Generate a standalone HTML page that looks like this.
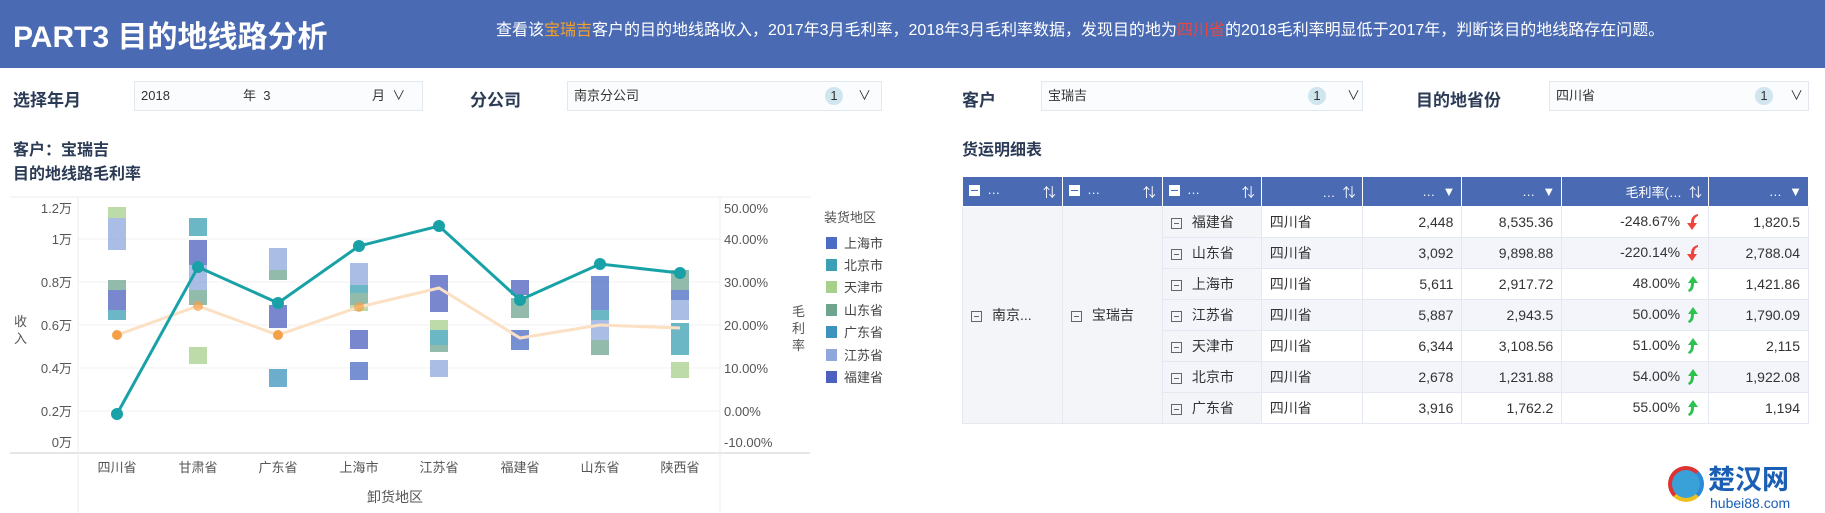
<!DOCTYPE html>
<html><head><meta charset="utf-8"><style>
*{margin:0;padding:0;box-sizing:border-box}
body{width:1825px;height:513px;background:#fff;font-family:"Liberation Sans","Noto Sans CJK SC",sans-serif;position:relative;overflow:hidden;color:#333}
.a{position:absolute;white-space:nowrap}
.hdr{left:0;top:0;width:1825px;height:68px;background:#4a6bb3}
.lbl{font-size:17px;font-weight:bold;color:#2b3a55}
.box{border:1px solid #e3e8ee;background:#fbfcfd;height:30px;font-size:13px;line-height:28px;color:#333}
.one{position:absolute;width:18px;height:18px;border-radius:9px;background:#cfe6ee;text-align:center;line-height:18px;font-size:13px;top:5px}
.chev{position:absolute;top:0;font-size:13px}
table{border-collapse:collapse;font-size:14px}
td{border:1px solid #e4e8f0;height:31px;padding:0 8px}
th{background:#4a6bb3;color:#fff;height:30px;border:1px solid #fff;font-weight:normal;font-size:13px;padding:0 6px}
.r{text-align:right}
.mi{display:inline-block;width:11px;height:11px;border:1px solid #666;position:relative;vertical-align:middle;margin-right:10px}
.mi:after{content:"";position:absolute;left:2px;right:2px;top:4px;height:1px;background:#666}
.hm{display:inline-block;width:11px;height:11px;background:#fff;position:relative;vertical-align:middle}
.hm:after{content:"";position:absolute;left:2px;right:2px;top:5px;height:1px;background:#4a6bb3}
svg.ar{vertical-align:middle;margin-left:6px}
</style></head><body>
<div class="a hdr"></div>
<div class="a" style="left:13px;top:18px;font-size:30px;font-weight:bold;color:#fff;line-height:40px">PART3 目的地线路分析</div>
<div class="a" style="left:496px;top:16px;font-size:16px;color:#fff">查看该<span style="color:#f5a02a">宝瑞吉</span>客户的目的地线路收入，2017年3月毛利率，2018年3月毛利率数据，发现目的地为<span style="color:#e8483d">四川省</span>的2018毛利率明显低于2017年，判断该目的地线路存在问题。</div>

<div class="a lbl" style="left:13px;top:86px">选择年月</div>
<div class="a box" style="left:134px;top:81px;width:289px"><span class="a" style="left:6px">2018</span><span class="a" style="left:108px">年&nbsp; 3</span><span class="a" style="left:237px">月 &nbsp;∨</span></div>
<div class="a lbl" style="left:470px;top:86px">分公司</div>
<div class="a box" style="left:567px;top:81px;width:315px"><span class="a" style="left:6px">南京分公司</span><span class="one" style="left:257px">1</span><span class="chev" style="left:290px">∨</span></div>
<div class="a lbl" style="left:962px;top:86px">客户</div>
<div class="a box" style="left:1041px;top:81px;width:322px"><span class="a" style="left:6px">宝瑞吉</span><span class="one" style="left:266px">1</span><span class="chev" style="left:305px">∨</span></div>
<div class="a lbl" style="left:1416px;top:86px">目的地省份</div>
<div class="a box" style="left:1549px;top:81px;width:260px"><span class="a" style="left:6px">四川省</span><span class="one" style="left:205px">1</span><span class="chev" style="left:240px">∨</span></div>

<div class="a lbl" style="left:13px;top:136px;font-size:16px">客户：宝瑞吉</div>
<div class="a lbl" style="left:13px;top:160px;font-size:16px">目的地线路毛利率</div>
<div class="a lbl" style="left:962px;top:136px;font-size:16px">货运明细表</div>

<svg class="a" style="left:0;top:0" width="960" height="513" font-family="Liberation Sans,Noto Sans CJK SC,sans-serif" font-size="13" fill="#555">
<line x1="10" y1="197" x2="810" y2="197" stroke="#eee"/>
<g stroke="#f2f2f2"><line x1="78" y1="239" x2="720" y2="239"/><line x1="78" y1="282" x2="720" y2="282"/><line x1="78" y1="325" x2="720" y2="325"/><line x1="78" y1="368" x2="720" y2="368"/><line x1="78" y1="411" x2="720" y2="411"/></g>
<line x1="10" y1="453" x2="810" y2="453" stroke="#e6e6e6" stroke-width="2"/>
<line x1="78" y1="197" x2="78" y2="513" stroke="#eee"/><line x1="720" y1="197" x2="720" y2="513" stroke="#eee"/>
<g text-anchor="end"><text x="72" y="213">1.2万</text><text x="72" y="244">1万</text><text x="72" y="287">0.8万</text><text x="72" y="330">0.6万</text><text x="72" y="373">0.4万</text><text x="72" y="416">0.2万</text><text x="72" y="447">0万</text></g>
<g><text x="724" y="213">50.00%</text><text x="724" y="244">40.00%</text><text x="724" y="287">30.00%</text><text x="724" y="330">20.00%</text><text x="724" y="373">10.00%</text><text x="724" y="416">0.00%</text><text x="724" y="447">-10.00%</text></g>
<text x="14" y="326">收</text><text x="14" y="343">入</text>
<text x="792" y="316">毛</text><text x="792" y="333">利</text><text x="792" y="350">率</text>
<g text-anchor="middle"><text x="117" y="472">四川省</text><text x="198" y="472">甘肃省</text><text x="278" y="472">广东省</text><text x="359" y="472">上海市</text><text x="439" y="472">江苏省</text><text x="520" y="472">福建省</text><text x="600" y="472">山东省</text><text x="680" y="472">陕西省</text><text x="395" y="502" font-size="14">卸货地区</text></g>
<text x="824" y="222">装货地区</text>
<g font-size="13" fill="#444">
<rect x="826" y="237" width="11" height="12" fill="#4a6cc4"/><text x="844" y="248">上海市</text>
<rect x="826" y="259" width="11" height="12" fill="#3aa0b4"/><text x="844" y="270">北京市</text>
<rect x="826" y="281" width="11" height="12" fill="#a8d08d"/><text x="844" y="292">天津市</text>
<rect x="826" y="304" width="11" height="12" fill="#6fa58f"/><text x="844" y="315">山东省</text>
<rect x="826" y="326" width="11" height="12" fill="#3d93bd"/><text x="844" y="337">广东省</text>
<rect x="826" y="349" width="11" height="12" fill="#8ea7dc"/><text x="844" y="360">江苏省</text>
<rect x="826" y="371" width="11" height="12" fill="#4d60c0"/><text x="844" y="382">福建省</text></g>
<g opacity="0.75">
<rect x="108" y="207" width="18" height="11" fill="#a8d08d"/><rect x="108" y="218" width="18" height="32" fill="#8ea7dc"/><rect x="108" y="280" width="18" height="10" fill="#6fa58f"/><rect x="108" y="290" width="18" height="20" fill="#4d60c0"/><rect x="108" y="310" width="18" height="10" fill="#3aa0b4"/>
<rect x="189" y="218" width="18" height="18" fill="#3aa0b4"/><rect x="189" y="240" width="18" height="25" fill="#4d60c0"/><rect x="189" y="265" width="18" height="25" fill="#8ea7dc"/><rect x="189" y="290" width="18" height="15" fill="#6fa58f"/><rect x="189" y="347" width="18" height="17" fill="#a8d08d"/>
<rect x="269" y="248" width="18" height="22" fill="#8ea7dc"/><rect x="269" y="270" width="18" height="10" fill="#6fa58f"/><rect x="269" y="305" width="18" height="23" fill="#4d60c0"/><rect x="269" y="369" width="18" height="18" fill="#3d93bd"/>
<rect x="350" y="263" width="18" height="22" fill="#8ea7dc"/><rect x="350" y="285" width="18" height="8" fill="#3aa0b4"/><rect x="350" y="293" width="18" height="12" fill="#6fa58f"/><rect x="350" y="305" width="18" height="6" fill="#a8d08d"/><rect x="350" y="330" width="18" height="19" fill="#4d60c0"/><rect x="350" y="362" width="18" height="18" fill="#4a6cc4"/>
<rect x="430" y="275" width="18" height="37" fill="#4d60c0"/><rect x="430" y="320" width="18" height="10" fill="#a8d08d"/><rect x="430" y="330" width="18" height="15" fill="#3aa0b4"/><rect x="430" y="345" width="18" height="7" fill="#6fa58f"/><rect x="430" y="360" width="18" height="17" fill="#8ea7dc"/>
<rect x="511" y="280" width="18" height="15" fill="#4d60c0"/><rect x="511" y="298" width="18" height="20" fill="#6fa58f"/><rect x="511" y="330" width="18" height="20" fill="#4a6cc4"/>
<rect x="591" y="276" width="18" height="34" fill="#4a6cc4"/><rect x="591" y="310" width="18" height="10" fill="#3aa0b4"/><rect x="591" y="320" width="18" height="20" fill="#8ea7dc"/><rect x="591" y="340" width="18" height="15" fill="#6fa58f"/>
<rect x="671" y="270" width="18" height="20" fill="#6fa58f"/><rect x="671" y="290" width="18" height="10" fill="#4a6cc4"/><rect x="671" y="300" width="18" height="20" fill="#8ea7dc"/><rect x="671" y="323" width="18" height="32" fill="#3aa0b4"/><rect x="671" y="362" width="18" height="16" fill="#a8d08d"/>
</g>
<polyline points="117,335 198,306 278,335 359,307 439,288 520,338 600,325 680,328" fill="none" stroke="#fbe0c4" stroke-width="3"/>
<g fill="#f5a046"><circle cx="117" cy="335" r="5"/><circle cx="198" cy="306" r="5" opacity=".7"/><circle cx="278" cy="335" r="5"/><circle cx="359" cy="307" r="5" opacity=".7"/></g>
<polyline points="117,414 198,267 278,303 359,246 439,226 520,300 600,264 680,273" fill="none" stroke="#18a2a8" stroke-width="3"/>
<g fill="#18a2a8"><circle cx="117" cy="414" r="6"/><circle cx="198" cy="267" r="6"/><circle cx="278" cy="303" r="6"/><circle cx="359" cy="246" r="6"/><circle cx="439" cy="226" r="6"/><circle cx="520" cy="300" r="6"/><circle cx="600" cy="264" r="6"/><circle cx="680" cy="273" r="6"/></g>
</svg>

<svg width="0" height="0" style="position:absolute"><defs>
<symbol id="dn" viewBox="0 0 14 18"><path d="M12 1 C7 2 5 5 5 10 L1 10 L6 17 L11 10 L8 10 C8 6 9 4 12 3 Z" fill="#f0443a"/></symbol>
<symbol id="up" viewBox="0 0 14 18"><path d="M3 17 C7 16 8 12 8 8 L12 8 L7 1 L2 8 L5 8 C5 12 4 14 2 15 Z" fill="#2cc24e"/></symbol>
</defs></svg>

<table class="a" style="left:962px;top:176px;width:847px">
<tr><th style="width:100px;text-align:left"><span class="hm"></span>&nbsp; … &nbsp;<span style="float:right">⇅</span></th><th style="width:100px;text-align:left"><span class="hm"></span>&nbsp; … <span style="float:right">⇅</span></th><th style="width:99px;text-align:left"><span class="hm"></span>&nbsp; … <span style="float:right">⇅</span></th><th style="width:101px" class="r">… &nbsp;⇅</th><th style="width:100px" class="r">… &nbsp;▼</th><th style="width:100px" class="r">… &nbsp;▼</th><th style="width:147px" class="r">毛利率(… &nbsp;⇅</th><th style="width:100px" class="r">… &nbsp;▼</th></tr>
<tr style="background:#fff"><td rowspan="7" style="background:#f3f5f9"><span class="mi"></span>南京...</td><td rowspan="7" style="background:#f3f5f9"><span class="mi"></span>宝瑞吉</td><td style="background:#f3f5f9"><span class="mi"></span>福建省</td><td>四川省</td><td class="r">2,448</td><td class="r">8,535.36</td><td class="r">-248.67%<svg class="ar" width="14" height="18"><use href="#dn"/></svg></td><td class="r">1,820.5</td></tr>
<tr style="background:#f3f5fa"><td><span class="mi"></span>山东省</td><td>四川省</td><td class="r">3,092</td><td class="r">9,898.88</td><td class="r">-220.14%<svg class="ar" width="14" height="18"><use href="#dn"/></svg></td><td class="r">2,788.04</td></tr>
<tr style="background:#fff"><td style="background:#f3f5f9"><span class="mi"></span>上海市</td><td>四川省</td><td class="r">5,611</td><td class="r">2,917.72</td><td class="r">48.00%<svg class="ar" width="14" height="18"><use href="#up"/></svg></td><td class="r">1,421.86</td></tr>
<tr style="background:#f3f5fa"><td><span class="mi"></span>江苏省</td><td>四川省</td><td class="r">5,887</td><td class="r">2,943.5</td><td class="r">50.00%<svg class="ar" width="14" height="18"><use href="#up"/></svg></td><td class="r">1,790.09</td></tr>
<tr style="background:#fff"><td style="background:#f3f5f9"><span class="mi"></span>天津市</td><td>四川省</td><td class="r">6,344</td><td class="r">3,108.56</td><td class="r">51.00%<svg class="ar" width="14" height="18"><use href="#up"/></svg></td><td class="r">2,115</td></tr>
<tr style="background:#f3f5fa"><td><span class="mi"></span>北京市</td><td>四川省</td><td class="r">2,678</td><td class="r">1,231.88</td><td class="r">54.00%<svg class="ar" width="14" height="18"><use href="#up"/></svg></td><td class="r">1,922.08</td></tr>
<tr style="background:#fff"><td style="background:#f3f5f9"><span class="mi"></span>广东省</td><td>四川省</td><td class="r">3,916</td><td class="r">1,762.2</td><td class="r">55.00%<svg class="ar" width="14" height="18"><use href="#up"/></svg></td><td class="r">1,194</td></tr>
</table>

<div class="a" style="left:1668px;top:466px;width:36px;height:36px;border-radius:18px;border:4px solid #d33;border-right-color:#2a8ad8;border-bottom-color:#f0c020;background:#3aa0d8"></div>
<div class="a" style="left:1708px;top:462px;font-size:27px;font-weight:bold;color:#1a5fb4;font-family:'Noto Sans CJK SC',sans-serif;line-height:32px">楚汉网</div>
<div class="a" style="left:1710px;top:495px;font-size:14px;color:#1a5fb4;line-height:16px">hubei88.com</div>
</body></html>
